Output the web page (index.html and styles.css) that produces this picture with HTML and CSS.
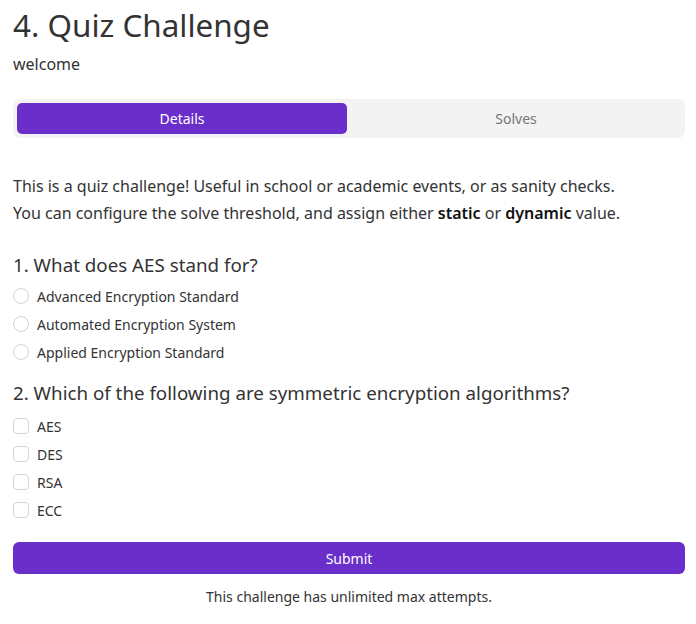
FILE: index.html
```html
<!DOCTYPE html>
<html lang="en">
<head>
    <meta charset="UTF-8">
    <meta name="viewport" content="width=device-width, initial-scale=1.0">
    <title>Quiz Challenge</title>
    <link rel="stylesheet" href="styles.css">
</head>
<body>
    <div class="challenge">
        <h1 class="title">4. Quiz Challenge</h1>
        <div class="category">welcome</div>

        <!-- tabs -->
        <nav class="tabs">
            <button class="tab active" type="button">Details</button>
            <button class="tab" type="button">Solves</button>
        </nav>

        <div class="description">
            <p>This is a quiz challenge! Useful in school or academic events, or as sanity checks.</p>
            <p>You can configure the solve threshold, and assign either <b>static</b> or <b>dynamic</b> value.</p>
        </div>

        <form class="quiz" onsubmit="return false;">
            <h2 class="question">1. What does AES stand for?</h2>
            <label class="option"><span class="box radio"></span>Advanced Encryption Standard</label>
            <label class="option"><span class="box radio"></span>Automated Encryption System</label>
            <label class="option"><span class="box radio"></span>Applied Encryption Standard</label>

            <h2 class="question multi">2. Which of the following are symmetric encryption algorithms?</h2>
            <label class="option"><span class="box check"></span>AES</label>
            <label class="option"><span class="box check"></span>DES</label>
            <label class="option"><span class="box check"></span>RSA</label>
            <label class="option"><span class="box check"></span>ECC</label>

            <button class="submit" type="submit">Submit</button>
        </form>

        <p class="attempts">This challenge has unlimited max attempts.</p>
    </div>
</body>
</html>
```

FILE: styles.css
```css
body {
    margin: 0;
    font-family: "Noto Sans", "Open Sans", sans-serif;
    color: #333;
    background: #fff;
}
.challenge {
    padding: 0 11px 0 13px;
}
.title {
    margin: 0;
    padding-top: 3px;
    font-size: 31.4px;
    font-weight: 400;
    line-height: 44px;
}
.category {
    margin-top: 6px;
    font-size: 16px;
    line-height: 22px;
}
.tabs {
    display: flex;
    gap: 4px;
    margin-top: 24px;
    padding: 4px;
    background: #f3f3f3;
    border-radius: 7px;
}
.tab {
    flex: 1;
    height: 31px;
    border: none;
    border-radius: 5px;
    background: transparent;
    font-family: inherit;
    font-size: 14px;
    color: #777;
    cursor: pointer;
}
.tab.active {
    background: #6a2ecb;
    color: #fff;
}
.description {
    margin-top: 35px;
}
.description p {
    margin: 0;
    font-size: 16px;
    line-height: 27px;
}
.description b {
    font-weight: 600;
    color: #111;
}
.quiz {
    margin-top: 23px;
}
.question {
    margin: 0 0 2px;
    font-size: 18.75px;
    font-weight: 400;
    line-height: 30px;
}
.question.multi {
    margin-bottom: 4px;
}
.option {
    display: flex;
    align-items: center;
    gap: 8px;
    height: 28px;
    font-size: 14px;
}
.box {
    width: 14px;
    height: 14px;
    border: 1px solid #d4d4d4;
    background: #fff;
}
.radio {
    border-radius: 50%;
}
.check {
    border-radius: 4px;
}
.option + .question {
    margin-top: 12px;
}
.submit {
    display: block;
    width: 100%;
    height: 32px;
    margin-top: 18px;
    border: none;
    border-radius: 6px;
    background: #6a2ecb;
    color: #fff;
    font-family: inherit;
    font-size: 14px;
}
.attempts {
    margin: 13px 0 0;
    text-align: center;
    font-size: 14px;
    line-height: 20px;
}
```
